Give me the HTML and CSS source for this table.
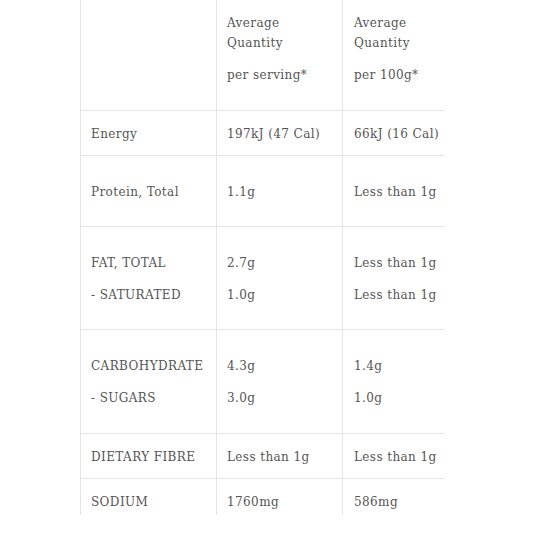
FILE: index.html
```html
<!DOCTYPE html>
<html>
<head>
<meta charset="utf-8">
<link rel="stylesheet" href="styles.css">
</head>
<body>
<div class="viewport">
  <table class="nutrition">
    <colgroup>
      <col class="c1"><col class="c2"><col class="c3">
    </colgroup>
    <tr class="head">
      <td></td>
      <td><p>Average<br>Quantity</p><p>per serving*</p></td>
      <td><p>Average<br>Quantity</p><p>per 100g*</p></td>
    </tr>
    <tr class="short">
      <td>Energy</td>
      <td>197kJ (47 Cal)</td>
      <td>66kJ (16 Cal)</td>
    </tr>
    <tr class="tall">
      <td><p>Protein, Total</p></td>
      <td><p>1.1g</p></td>
      <td><p>Less than 1g</p></td>
    </tr>
    <tr class="tall">
      <td><p>FAT, TOTAL</p><p>- SATURATED</p></td>
      <td><p>2.7g</p><p>1.0g</p></td>
      <td><p>Less than 1g</p><p>Less than 1g</p></td>
    </tr>
    <tr class="tall carb">
      <td><p>CARBOHYDRATE</p><p>- SUGARS</p></td>
      <td><p>4.3g</p><p>3.0g</p></td>
      <td><p>1.4g</p><p>1.0g</p></td>
    </tr>
    <tr class="short">
      <td>DIETARY FIBRE</td>
      <td>Less than 1g</td>
      <td>Less than 1g</td>
    </tr>
    <tr class="short last">
      <td>SODIUM</td>
      <td>1760mg</td>
      <td>586mg</td>
    </tr>
  </table>
</div>
</body>
</html>
```

FILE: styles.css
```css
html, body {
  margin: 0;
  padding: 0;
  background: #ffffff;
}

.viewport {
  height: 515px;
  overflow: hidden;
  padding-left: 80px;
}

.nutrition {
  border-collapse: separate;
  border-spacing: 0;
  table-layout: fixed;
  width: 365px;
  font-family: "DejaVu Serif", serif;
  font-size: 12px;
  line-height: 20px;
  letter-spacing: 0.4px;
  color: #555555;
}

.c1 { width: 136px; }
.c2 { width: 126px; }
.c3 { width: 103px; }

.nutrition td {
  border-left: 1px solid #e4e4e4;
  border-bottom: 1px solid #e4e4e4;
  padding: 13px 6px 11px 10px;
  vertical-align: middle;
  white-space: nowrap;
}

.nutrition tr.last td {
  border-bottom: none;
}

.nutrition tr.tall td {
  padding-top: 26px;
  padding-bottom: 24px;
}

.nutrition tr.carb td {
  padding-bottom: 25px;
}

.nutrition tr.head td {
  padding-top: 13px;
  padding-bottom: 25px;
}

.nutrition td:nth-child(3) {
  padding-left: 11px;
}

.nutrition p {
  margin: 0;
}

.nutrition p + p {
  margin-top: 12px;
}
```
